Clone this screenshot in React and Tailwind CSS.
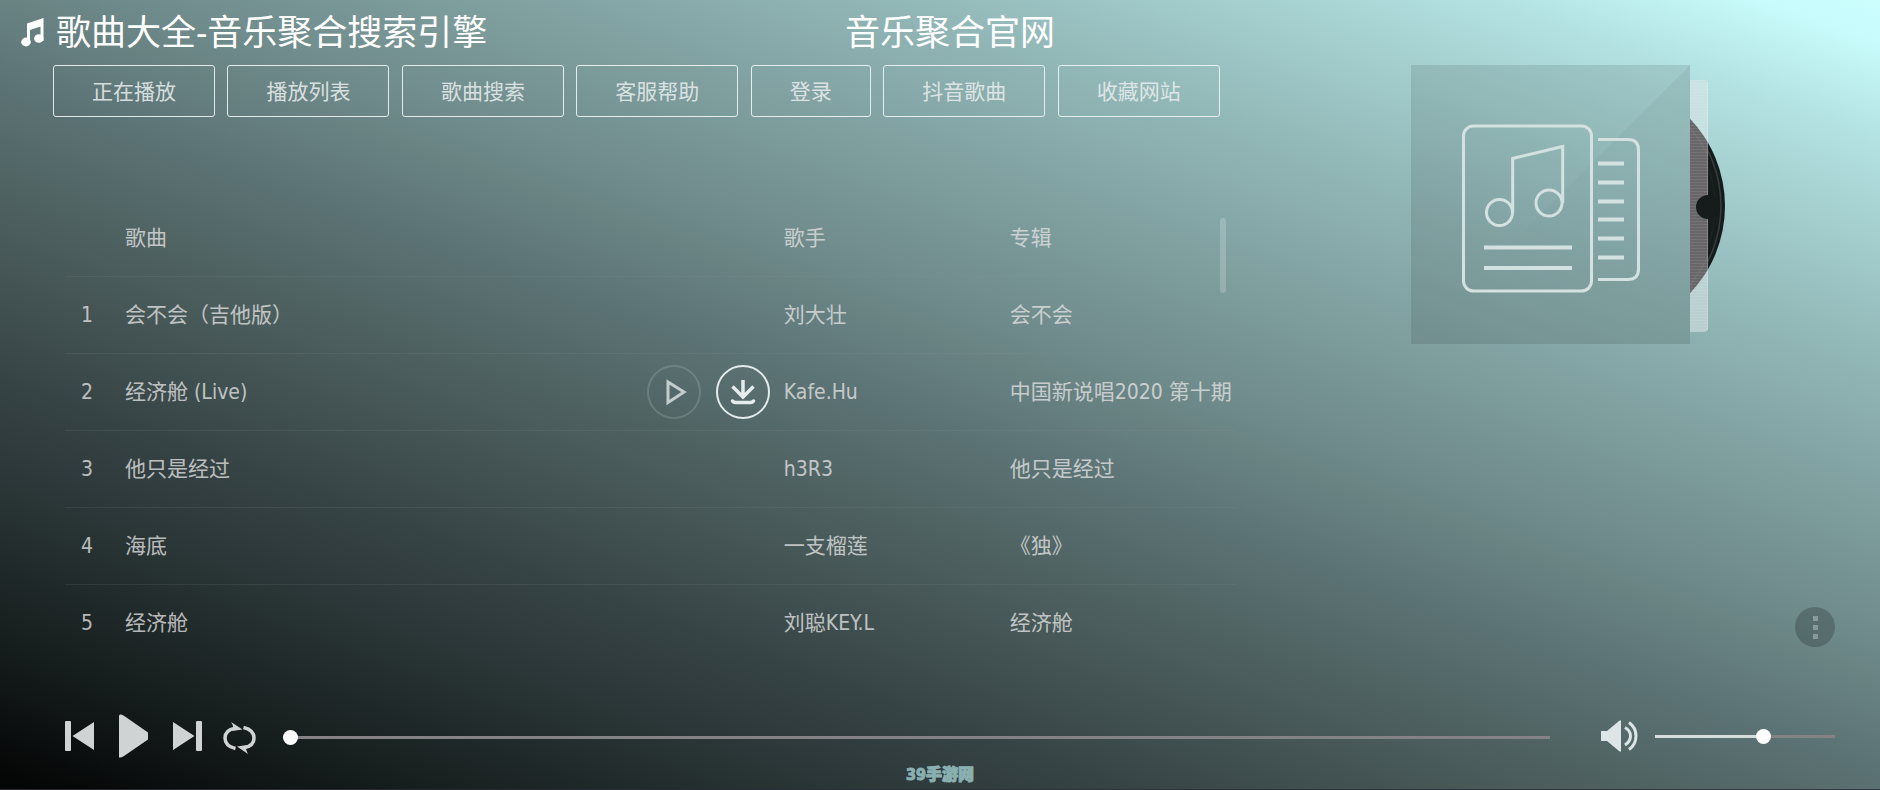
import React, { useState } from 'react';

const navItems = ['正在播放', '播放列表', '歌曲搜索', '客服帮助', '登录', '抖音歌曲', '收藏网站'];

const songs = [
  { id: 1, name: '会不会（吉他版）', singer: '刘大壮', album: '会不会' },
  { id: 2, name: '经济舱 (Live)', singer: 'Kafe.Hu', album: '中国新说唱2020 第十期' },
  { id: 3, name: '他只是经过', singer: 'h3R3', album: '他只是经过' },
  { id: 4, name: '海底', singer: '一支榴莲', album: '《独》' },
  { id: 5, name: '经济舱', singer: '刘聪KEY.L', album: '经济舱' },
];

const ticks = [98, 117, 136, 154, 173, 192];

const sliderClass =
  'block h-[15px] cursor-pointer appearance-none bg-transparent [&::-webkit-slider-runnable-track]:h-[3px] [&::-webkit-slider-runnable-track]:bg-[linear-gradient(to_right,#d6dddd_var(--filled),#848284_var(--filled))] [&::-webkit-slider-thumb]:-mt-[6px] [&::-webkit-slider-thumb]:h-[15px] [&::-webkit-slider-thumb]:w-[15px] [&::-webkit-slider-thumb]:appearance-none [&::-webkit-slider-thumb]:rounded-full [&::-webkit-slider-thumb]:bg-white';

const Header = () => (
  <header className="grid h-[65px] grid-cols-[1fr_auto_1fr] items-center pl-5 text-[35px] leading-[64px] text-white">
    <h1 className="flex items-center gap-3">
      <svg width="24" height="29" viewBox="0 0 24 29" fill="currentColor">
        <path d="M7 5.500 23.500 0v23h-3V8.500L10 12v12H7z" />
        <ellipse cx="6" cy="24" rx="4.800" ry="4.400" />
        <ellipse cx="18.800" cy="20.500" rx="4.700" ry="4.300" />
      </svg>
      歌曲大全-音乐聚合搜索引擎
    </h1>
    <h2>音乐聚合官网</h2>
  </header>
);

const SongList = () => (
  <div className="relative mt-[83px] ml-3">
    <table className="w-full table-fixed text-left whitespace-nowrap text-[#e1e1e1]/80">
      <thead>
        <tr className="h-[76px] border-b border-[#969696]/15">
          <th className="w-[60px]"></th>
          <th className="font-normal">歌曲</th>
          <th className="w-[226px] font-normal">歌手</th>
          <th className="w-[226px] font-normal">专辑</th>
        </tr>
      </thead>
      <tbody>
        {songs.map((song) => (
          <tr key={song.id} className="h-[77px] border-b border-[#969696]/15 last:border-b-0">
            <td className="pr-4 text-center">{song.id}</td>
            <td>
              <div className="flex items-center justify-between pr-[14px]">
                {song.name}
                {song.id === 2 && (
                  <span className="flex gap-[15px]">
                    <button aria-label="播放" className="h-[54px] w-[54px]">
                      <svg width="54" height="54" viewBox="0 0 54 54" fill="none">
                        <circle cx="27" cy="27" r="26" stroke="#fff" strokeOpacity="0.15" strokeWidth="2" />
                        <path d="M21 17v20.500L37 27z" stroke="#c4cccc" strokeWidth="3" />
                      </svg>
                    </button>
                    <button aria-label="下载" className="h-[54px] w-[54px]">
                      <svg width="54" height="54" viewBox="0 0 54 54" fill="none" stroke="#e6ebeb">
                        <circle cx="27" cy="27" r="26" strokeWidth="2" />
                        <path d="M27 15v16M16.500 21.500 27 32l10.500-10.500" strokeWidth="3.500" />
                        <path d="M16.500 36q1 1.500 3 1.500h15q2 0 3-1.500" strokeWidth="3.500" strokeLinecap="round" />
                      </svg>
                    </button>
                  </span>
                )}
              </div>
            </td>
            <td>{song.singer}</td>
            <td>{song.album}</td>
          </tr>
        ))}
      </tbody>
    </table>
    <div className="absolute top-[18px] right-[10px] h-[75px] w-[6px] rounded-full bg-white/20"></div>
  </div>
);

const Cover = () => (
  <svg width="314" height="279" viewBox="0 0 314 279" fill="none">
    <defs>
      <pattern id="ridges" width="4" height="3" patternUnits="userSpaceOnUse">
        <path d="M0 .5h4" stroke="#fff" strokeOpacity="0.08" />
      </pattern>
      <linearGradient id="gloss" x1="1" y1="0" x2="0.25" y2="0.75">
        <stop offset="0" stopColor="#000" stopOpacity="0.05" />
        <stop offset="1" stopColor="#000" stopOpacity="0" />
      </linearGradient>
      <clipPath id="inCase">
        <rect x="279" y="0" width="18" height="279" />
      </clipPath>
      <clipPath id="outCase">
        <rect x="297" y="0" width="17" height="279" />
      </clipPath>
    </defs>

    <path d="M279 15h14q4 0 4 4v244q0 4-4 4h-14z" fill="#dde5e7" fillOpacity="0.55" />
    <g clipPath="url(#inCase)">
      <circle cx="188" cy="141" r="126" fill="#686668" />
      <circle cx="188" cy="141" r="120" stroke="#757375" />
    </g>
    <g clipPath="url(#outCase)">
      <circle cx="188" cy="141" r="126" fill="#161b1c" />
      <circle cx="188" cy="141" r="122" stroke="#3a3e3f" strokeWidth="1.500" />
      <circle cx="188" cy="141" r="116" stroke="#1e2425" />
    </g>
    <rect x="279" y="15" width="18" height="252" fill="url(#ridges)" />
    <path d="M296.500 17v248" stroke="#fff" strokeOpacity="0.2" />
    <circle cx="297" cy="142" r="12" fill="#161b1c" />

    <rect width="279" height="279" fill="#000" fillOpacity="0.1" />
    <path d="M279 0v279H0z" fill="url(#gloss)" />
    <g stroke="#d3e1e1" strokeWidth="3">
      <rect x="52.500" y="61" width="128" height="165" rx="10" />
      <circle cx="88.500" cy="147.500" r="13" />
      <circle cx="138" cy="138" r="13" />
      <path d="M101.700 147.500V93.500l50-12V138" />
      <path d="M73 182.500h88M73 203h88" strokeWidth="4" />
      <path d="M187 74.500h30q10.500 0 10.500 10.500v119q0 10.500-10.500 10.500h-30" />
      {ticks.map((y) => (
        <path key={y} d={`M187 ${y}.5h26`} strokeWidth="4" />
      ))}
    </g>
  </svg>
);

const Player = () => {
  const [progress, setProgress] = useState(0);
  const [volume, setVolume] = useState(61);

  return (
    <div className="flex h-[44px] items-center pr-[45px] pl-[65px] text-[#d0d3d3]">
      <button aria-label="上一首">
        <svg width="29" height="30" viewBox="0 0 29 30" fill="currentColor">
          <path d="M1 0h4q1 0 1 1v28q0 1-1 1H1q-1 0-1-1V1q0-1 1-1zM29 1v28L7.500 15z" />
        </svg>
      </button>
      <button aria-label="播放" className="ml-[25px]">
        <svg width="29" height="44" viewBox="0 0 29 44" fill="currentColor">
          <path d="M0 2Q0 0 2 .5q2 .5 4 2L29 18.500v7L5 42q-3 2-5 1.500z" />
        </svg>
      </button>
      <button aria-label="下一首" className="ml-[25px]">
        <svg width="29" height="30" viewBox="0 0 29 30" fill="currentColor">
          <path d="M24 0h4q1 0 1 1v28q0 1-1 1h-4q-1 0-1-1V1q0-1 1-1zM0 1v28L21.500 15z" />
        </svg>
      </button>
      <button aria-label="循环播放" className="mt-1 ml-[21px]">
        <svg width="33" height="32" viewBox="0 0 33 32" fill="none">
          <path d="M12.500 26.500Q2 24 2 16 2 8 12 6.200" stroke="currentColor" strokeWidth="3.500" />
          <path d="M20.500 5.500Q31 8 31 16 31 24 21 25.800" stroke="currentColor" strokeWidth="3.500" />
          <path d="M8 0l11.500 7.500L9 9q3-3-1-9zM25 32 14 24.500l10.500-1.500q-3 3 .5 9z" fill="currentColor" />
        </svg>
      </button>
      <input
        type="range"
        aria-label="播放进度"
        value={progress}
        onChange={(e) => setProgress(Number(e.target.value))}
        className={`mt-[2px] ml-[27px] min-w-0 flex-1 ${sliderClass}`}
        style={{ '--filled': `${progress}%` }}
      />
      <button aria-label="音量" className="ml-[51px] text-[#dee5e6]">
        <svg width="37" height="32" viewBox="0 0 37 32" fill="none">
          <path d="M0 11h6L18 1q2-1.500 2 0v30q0 1.500-2 0L6 21H0z" fill="currentColor" />
          <path d="M24 7.500q5.500 3 5.500 8.500T24 25" stroke="currentColor" strokeWidth="3" />
          <path d="M28 2.500q7 5 7 13.500t-7 13.500" stroke="currentColor" strokeWidth="3" />
        </svg>
      </button>
      <input
        type="range"
        aria-label="音量大小"
        value={volume}
        onChange={(e) => setVolume(Number(e.target.value))}
        className={`ml-[17px] w-[180px] ${sliderClass}`}
        style={{ '--filled': `${volume}%` }}
      />
    </div>
  );
};

export default function App() {
  return (
    <div className="flex min-h-screen flex-col bg-[linear-gradient(20deg,#050606_1%,#161d1d_10%,#293435_20%,#374445_28%,#4a5c5b_38%,#5c7375_48%,#6e8989_56%,#93b8b8_76%,#b2e0e0_90%,#c8fbfb_97%,#ccfefe)] font-['DejaVu_Sans_Condensed','Noto_Sans_CJK_SC',sans-serif] text-[21px] leading-[30px]">
      <Header />

      <main className="flex">
        <section className="w-[66%] pr-[5px] pl-[53px]">
          <nav className="mr-4 flex justify-between">
            {navItems.map((item) => (
              <button
                key={item}
                className="h-[52px] rounded-[3px] border border-[#f0f5f5]/90 px-[38px] pt-[2px] whitespace-nowrap text-[#e6ecec]/90"
              >
                {item}
              </button>
            ))}
          </nav>
          <SongList />
        </section>

        <aside className="flex flex-1 flex-col items-center justify-between pb-[14px] pl-4">
          <Cover />
          <button
            aria-label="更多"
            className="mr-[45px] flex h-10 w-10 flex-col items-center justify-center gap-1 self-end rounded-full bg-black/20"
          >
            <i className="h-[5px] w-[5px] bg-white/30"></i>
            <i className="h-[5px] w-[5px] bg-white/30"></i>
            <i className="h-[5px] w-[5px] bg-white/30"></i>
          </button>
        </aside>
      </main>

      <footer className="mt-auto">
        <Player />
        <p className="flex h-8 items-center justify-center border-b border-[#2e2c3c]/80 pt-[2px] text-[16px] leading-8 font-black text-[#8ab0b1] [-webkit-text-stroke:1px_#8ab0b1]">
          39手游网
        </p>
      </footer>
    </div>
  );
}
